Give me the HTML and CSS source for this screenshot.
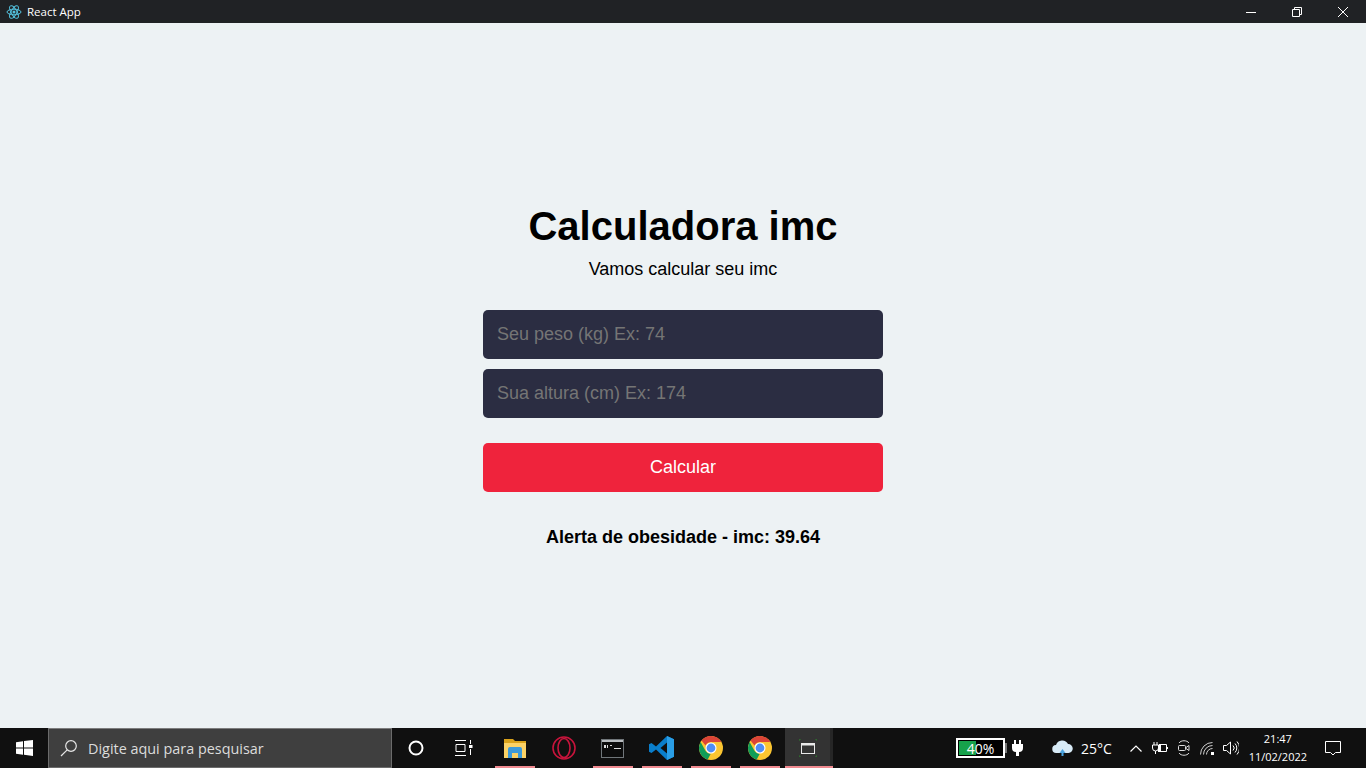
FILE: index.html
```html
<!DOCTYPE html>
<html lang="pt-BR">
<head>
  <meta charset="UTF-8" />
  <title>React App</title>
  <link rel="stylesheet" href="styles.css">
</head>
<body>
  <header class="titlebar">
    <svg class="react-logo" width="16" height="16" viewBox="0 0 16 16" fill="none" stroke="#53c1de" stroke-width="1">
      <circle cx="8" cy="8" r="1.5" fill="#53c1de" stroke="none" />
      <ellipse cx="8" cy="8" rx="7" ry="2.8" />
      <ellipse cx="8" cy="8" rx="7" ry="2.8" transform="rotate(60 8 8)" />
      <ellipse cx="8" cy="8" rx="7" ry="2.8" transform="rotate(120 8 8)" />
    </svg>
    <span class="app-title">React App</span>
    <div class="win-buttons">
      <span class="win-btn">
        <svg width="12" height="12" viewBox="0 0 12 12" stroke="#fff" fill="none"><path d="M1 6.5h10" /></svg>
      </span>
      <span class="win-btn">
        <svg width="12" height="12" viewBox="0 0 12 12" stroke="#fff" fill="none"><path d="M1.5 3.5h7v7h-7zM3.5 3.5v-2h7v7h-2" /></svg>
      </span>
      <span class="win-btn">
        <svg width="12" height="12" viewBox="0 0 12 12" stroke="#fff" fill="none"><path d="M1 1l10 10M11 1L1 11" /></svg>
      </span>
    </div>
  </header>

  <main class="app">
    <h1>Calculadora imc</h1>
    <p class="subtitle">Vamos calcular seu imc</p>
    <form class="imc-form">
      <input type="text" placeholder="Seu peso (kg) Ex: 74" />
      <input type="text" placeholder="Sua altura (cm) Ex: 174" />
      <button type="button">Calcular</button>
    </form>
    <h3 class="result">Alerta de obesidade - imc: 39.64</h3>
  </main>

  <footer class="taskbar">
    <span class="start">
      <svg width="17" height="16" viewBox="0 0 17 16" fill="#fff"><path d="M0 2.3l7-1v6.3H0zM8 1.100L17 0v7.600H8zM0 8.500h7v6.200l-7-1zM8 8.500h9V16l-9-1.200z" /></svg>
    </span>
    <div class="search">
      <svg width="18" height="18" viewBox="0 0 18 18" fill="none" stroke="#e6e6e6" stroke-width="1.2"><circle cx="11" cy="7" r="5.300" /><path d="M7.200 10.800L1 17" /></svg>
      <span>Digite aqui para pesquisar</span>
    </div>
    <span class="task-btn">
      <svg width="16" height="16" viewBox="0 0 16 16" fill="none" stroke="#fff" stroke-width="2"><circle cx="8" cy="8" r="6.500" /></svg>
    </span>
    <span class="task-btn">
      <svg width="18" height="16" viewBox="0 0 18 16" fill="none" stroke="#fff"><path d="M0 .5h11M0 15.500h11M1 4.500h9v7H1zM15.500 0v4M15.500 9v6" /><rect x="14" y="5" width="3.500" height="3" fill="#fff" stroke="none" /></svg>
    </span>

    <div class="apps">
      <span class="app-icon running">
        <svg width="22" height="20" viewBox="0 0 22 20"><path d="M0 1h9l2 2h11v3H0z" fill="#d9a21b" /><path d="M0 5h22v15H0z" fill="#fbd266" /><path d="M4 20v-9a2 2 0 0 1 2-2h10a2 2 0 0 1 2 2v9h-4v-5H8v5z" fill="#3d9ad9" /></svg>
      </span>
      <span class="app-icon">
        <svg width="24" height="24" viewBox="0 0 24 24" fill="none" stroke="#c8143c" stroke-width="1.600"><circle cx="12" cy="12" r="11" /><ellipse cx="12" cy="12" rx="6" ry="9.500" /></svg>
      </span>
      <span class="app-icon running">
        <svg width="23" height="19" viewBox="0 0 23 19"><rect x=".5" y=".5" width="22" height="18" fill="#0c0c0c" stroke="#70767a" /><path d="M1 1h21v2H1z" fill="#b9bdc0" /><path d="M3 6h2v3H3zM6 6h1v3H6zM9 6h2v1H9zM13 9h7v1h-7z" fill="#ddd" /></svg>
      </span>
      <span class="app-icon running">
        <svg width="25" height="24" viewBox="0 0 25 24"><path d="M18 0l7 3.200v17.600L18 24 7 13.500 2.500 17 0 15.700V8.300L2.500 7 7 10.500z" fill="#0a7ecb" /><path d="M18 6.500L11.500 12l6.500 5.500z" fill="#101010" /><path d="M18 0l7 3.200v17.600L18 24z" fill="#2a9ee6" /></svg>
      </span>
      <span class="app-icon running">
        <svg class="chrome" width="24" height="24" viewBox="0 0 24 24"><circle cx="12" cy="12" r="12" fill="#fbc531" /><path d="M12 0a12 12 0 0 1 10.400 6H12a6 6 0 0 0-5.500 3.600L2.500 4.500A12 12 0 0 1 12 0z" fill="#db4437" /><path d="M1.600 6l5 9a6 6 0 0 0 5 3l-2.900 5.500A12 12 0 0 1 1.600 6z" fill="#109d58" /><circle cx="12" cy="12" r="5.500" fill="#fff" /><circle cx="12" cy="12" r="4.400" fill="#4f8df5" /></svg>
      </span>
      <span class="app-icon running">
        <svg class="chrome" width="24" height="24" viewBox="0 0 24 24"><circle cx="12" cy="12" r="12" fill="#fbc531" /><path d="M12 0a12 12 0 0 1 10.400 6H12a6 6 0 0 0-5.500 3.600L2.500 4.500A12 12 0 0 1 12 0z" fill="#db4437" /><path d="M1.600 6l5 9a6 6 0 0 0 5 3l-2.900 5.500A12 12 0 0 1 1.600 6z" fill="#109d58" /><circle cx="12" cy="12" r="5.500" fill="#fff" /><circle cx="12" cy="12" r="4.400" fill="#4f8df5" /></svg>
      </span>
      <span class="app-icon running active">
        <svg width="18" height="18" viewBox="0 0 18 18" fill="none"><path d="M0 2V0h2M16 0h2v2M18 16v2h-2M2 18H0v-2" stroke="#2f7d2f" /><rect x="2.500" y="4.500" width="13" height="10" stroke="#e8e8e8" /><path d="M2 4h14v2.500H2z" fill="#e8e8e8" /></svg>
      </span>
    </div>

    <div class="battery">
      <div class="battery-body">
        <span class="battery-fill"></span>
        <span class="battery-text">40%</span>
      </div>
      <span class="battery-tip"></span>
    </div>
    <svg class="plug" width="11" height="16" viewBox="0 0 11 16" fill="#fff"><path d="M2 0h2v4h3V0h2v4h2v4a4 4 0 0 1-4 4v4H4v-4a4 4 0 0 1-4-4V4h2z" /></svg>

    <div class="weather">
      <svg width="21" height="16" viewBox="0 0 21 16"><path d="M4.500 13a4 4 0 0 1-.5-8A6.500 6.500 0 0 1 16 4a4.500 4.500 0 0 1 .5 9z" fill="#d8ebf7" /><path d="M10.500 9l3 4h-2v3h-2v-3h-2z" fill="#4aa3df" /></svg>
      <span>25°C</span>
    </div>

    <div class="tray">
      <svg width="12" height="7" viewBox="0 0 12 7" fill="none" stroke="#fff" stroke-width="1.200"><path d="M.5 6.500L6 1l5.500 5.500" /></svg>
      <svg width="16" height="12" viewBox="0 0 16 12" fill="none" stroke="#fff"><path d="M2 0v3M5 0v3M.5 3h6v3a3 3 0 0 1-6 0zM3.500 9v3M7 2.500h7.500v7H6" /><path d="M14.500 5H16v2h-1.500zM6 3h3v6H6z" fill="#fff" stroke="none" /></svg>
      <svg width="12" height="16" viewBox="0 0 12 16" fill="none" stroke="#ddd"><path d="M1 3c2-3 8-3 10 0M1 13c2 3 8 3 10 0" /><rect x=".5" y="5.500" width="7" height="5" rx="1" /><path d="M8 7.500l3-2v5l-3-2" /></svg>
      <svg width="15" height="13" viewBox="0 0 15 13" fill="none" stroke="#cfcfcf"><path d="M.5 12.500A12 12 0 0 1 12.500 .5M3.500 12.500a9 9 0 0 1 9-9M6.500 12.500a6 6 0 0 1 6-6" /><rect x="11" y="10" width="3" height="3" fill="#fff" stroke="none" /></svg>
      <svg class="volume" width="16" height="14" viewBox="0 0 16 14" fill="none" stroke="#fff"><path d="M.5 4.500h3L7.500 1v12l-4-3.500h-3zM10 4.500a3.500 3.500 0 0 1 0 5M12 2.500a6.500 6.500 0 0 1 0 9M14 .5a9.500 9.500 0 0 1 0 13" /></svg>
    </div>

    <div class="clock">
      <span>21:47</span>
      <span>11/02/2022</span>
    </div>
    <span class="notify">
      <svg width="16" height="15" viewBox="0 0 16 15" fill="none" stroke="#fff"><path d="M.5 .5h15v11h-5L8 14l-2.500-2.500h-5z" /></svg>
    </span>
  </footer>
</body>
</html>
```

FILE: styles.css
```css
* {
  box-sizing: border-box;
}
html, body {
  height: 100%;
}
body {
  margin: 0;
  display: flex;
  flex-direction: column;
  height: 768px;
  overflow: hidden;
  background: #edf2f4;
  font-family: 'Liberation Sans', Arial, sans-serif;
}

/* window title bar */
.titlebar {
  height: 23px;
  flex-shrink: 0;
  display: flex;
  align-items: center;
  padding-left: 6px;
  background: #202225;
  color: #fff;
}
.app-title {
  margin-left: 5px;
  font-family: 'Open Sans', sans-serif;
  font-size: 11.5px;
}
.win-buttons {
  margin-left: auto;
  display: flex;
}
.win-btn {
  width: 46px;
  height: 23px;
  display: flex;
  align-items: center;
  justify-content: center;
}

/* calculator */
.app {
  flex: 1;
  display: flex;
  flex-direction: column;
  align-items: center;
  justify-content: center;
  color: #000;
}
h1 {
  margin: 0;
  font-size: 40px;
  line-height: 46px;
}
.subtitle {
  margin: 10px 0 0;
  font-size: 18px;
  line-height: 21px;
}
.imc-form {
  width: 400px;
  margin-top: 30px;
  display: flex;
  flex-direction: column;
}
.imc-form input {
  height: 49px;
  margin-bottom: 10px;
  padding: 0 14px;
  border: 0;
  border-radius: 5px;
  background: #2b2d42;
  color: #fff;
  font-family: inherit;
  font-size: 18px;
}
.imc-form input::placeholder {
  color: #757575;
  opacity: 1;
}
.imc-form button {
  height: 49px;
  margin-top: 15px;
  border: 0;
  border-radius: 5px;
  background: #ef233c;
  color: #fff;
  font-family: inherit;
  font-size: 18px;
}
.result {
  margin: 35px 0 0;
  font-size: 18px;
  line-height: 21px;
}

/* windows taskbar */
.taskbar {
  height: 40px;
  flex-shrink: 0;
  display: flex;
  align-items: center;
  background: #101010;
  color: #fff;
  font-family: 'Open Sans', sans-serif;
}
.start {
  width: 48px;
  display: flex;
  justify-content: center;
}
.search {
  width: 344px;
  height: 40px;
  display: flex;
  align-items: center;
  gap: 10px;
  padding-left: 11px;
  background: #3f3f3f;
  border: 1px solid #6b6b6b;
  border-top-color: #7d7d7d;
  color: #dcdcdc;
  font-size: 14.4px;
}
.task-btn {
  width: 48px;
  display: flex;
  justify-content: center;
}
.apps {
  margin-left: 2px;
  display: flex;
}
.app-icon {
  position: relative;
  width: 49px;
  height: 40px;
  display: flex;
  align-items: center;
  justify-content: center;
}
.app-icon.running::after {
  content: "";
  position: absolute;
  left: 5px;
  right: 4px;
  bottom: 0;
  height: 2px;
  background: #f08a90;
}
.app-icon.active {
  width: 48px;
  margin-left: 1px;
  background: #333;
  border-right: 3px solid #262626;
}
.app-icon.active::after {
  left: 0;
  right: -3px;
}
.battery {
  margin-left: 123px;
  display: flex;
  align-items: center;
}
.battery-body {
  position: relative;
  width: 49px;
  height: 20px;
  border: 2px solid #fff;
  background: #000;
}
.battery-fill {
  position: absolute;
  left: 1px;
  top: 1px;
  bottom: 1px;
  width: 17px;
  background: #17a24b;
}
.battery-text {
  position: absolute;
  inset: 0;
  display: flex;
  align-items: center;
  justify-content: center;
  font-size: 14px;
}
.battery-tip {
  width: 2px;
  height: 10px;
  background: #777;
}
.plug {
  margin-left: 5px;
}
.weather {
  margin-left: 29px;
  display: flex;
  align-items: center;
  gap: 8px;
  font-size: 14px;
}
.tray {
  margin-left: 18px;
  display: flex;
  align-items: center;
  gap: 10px;
}
.tray .volume {
  margin-left: -2px;
}
.clock {
  width: 70px;
  margin-left: 4px;
  display: flex;
  flex-direction: column;
  align-items: center;
  gap: 3px;
  font-size: 11px;
  line-height: 15px;
  transform: translateY(-1px);
}
.notify {
  margin-left: 1px;
  width: 38px;
  display: flex;
  justify-content: center;
}
```
